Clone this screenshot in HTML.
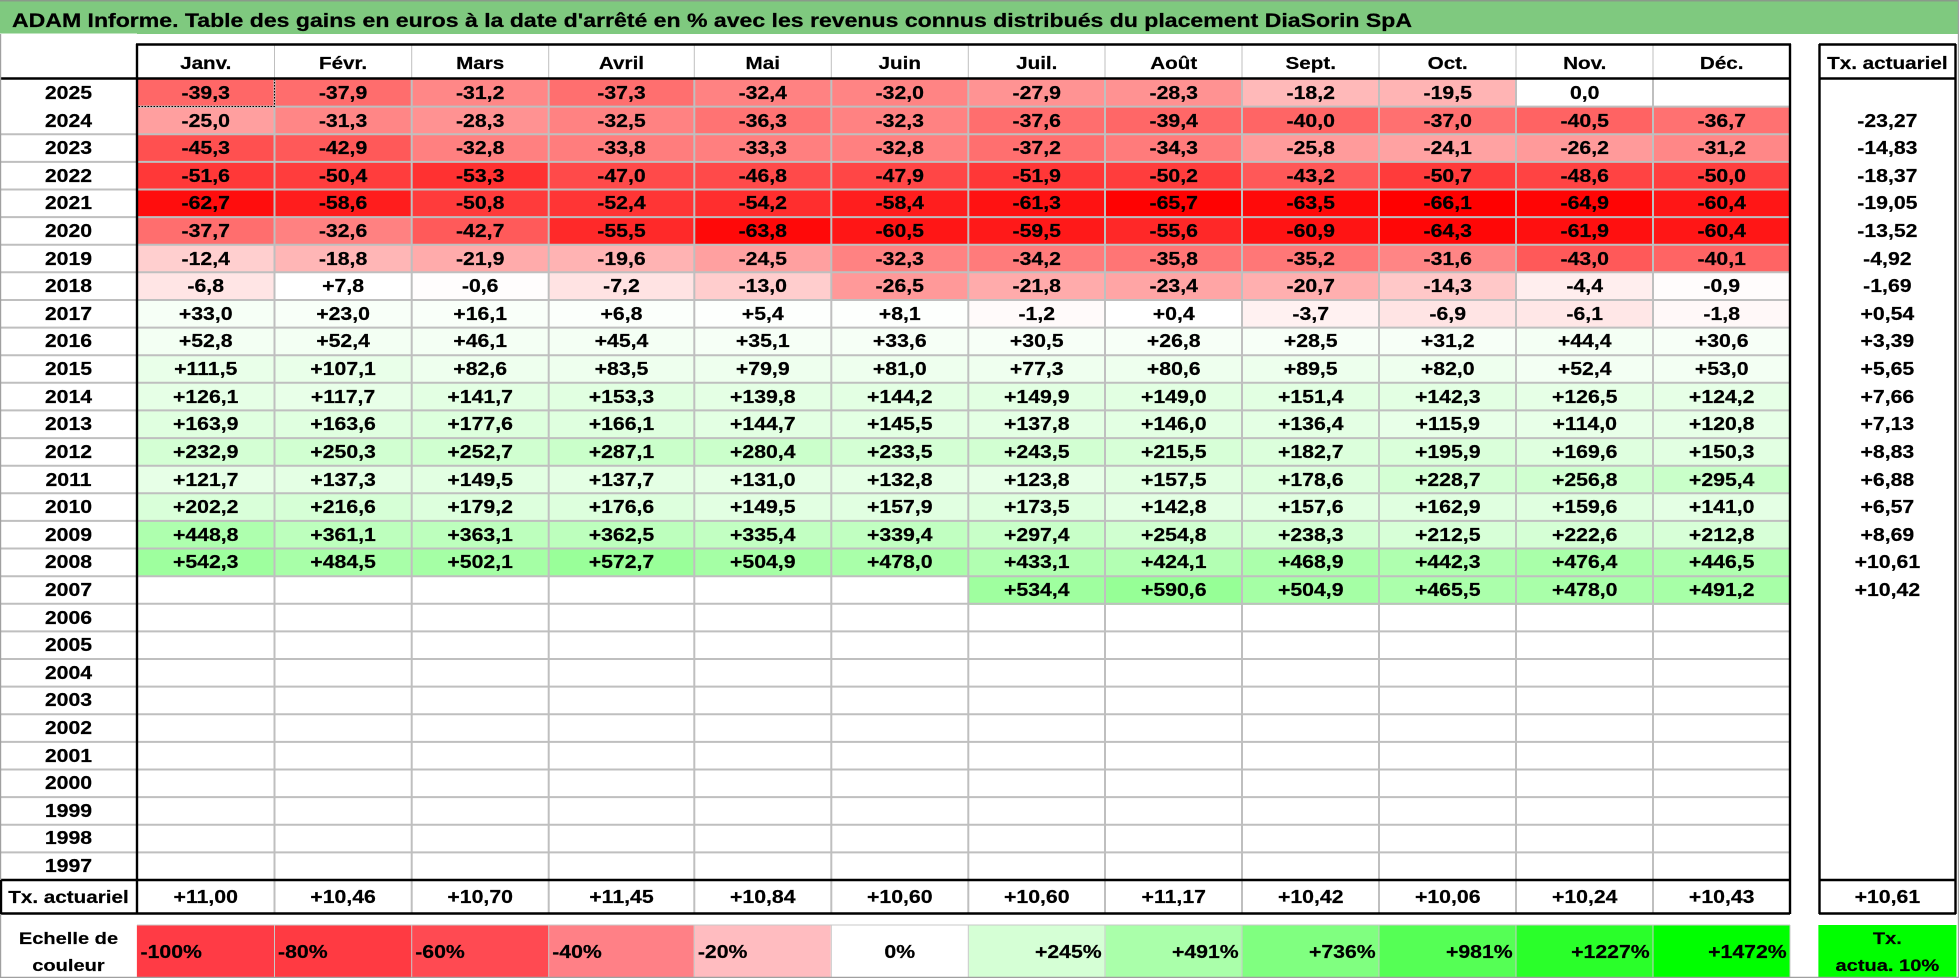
<!DOCTYPE html>
<html lang="fr"><head><meta charset="utf-8"><title>ADAM Informe</title>
<style>
html,body{margin:0;padding:0;background:#fff}
#p{position:relative;width:1959px;height:978px;overflow:hidden;background:#fff;font-family:"Liberation Sans",Arial,sans-serif;color:#000}
#t{position:absolute;left:0;top:0;width:1660.2px;height:978px;transform-origin:0 0;transform:scaleX(1.18);font-weight:700;font-size:18px;-webkit-text-stroke:.2px #000}
.r{position:absolute;left:0;width:100%;display:grid;grid-template-columns:116.1px 116.5px 116.3px 116.1px 123.4px repeat(8,116.1px) 24.3px 116.1px;text-align:center;white-space:nowrap}
.d{height:27.62px;line-height:29px}
.w{position:absolute;left:0;top:79px;width:100%}
.w .r{position:relative}
.r i,.r s,.r u,.r b{display:block;font-style:normal;text-decoration:none;font-weight:700}
.r i{background:rgb(255,var(--g),var(--g))}
.r s{background:rgb(calc(var(--r) - 3),255,calc(var(--r) - 3))}
.r .x{grid-column:15}
.h{top:45px;height:33px;line-height:36px;font-size:17.5px}
.f{top:881px;height:32px;line-height:33px}
.l{top:925px;height:52px;line-height:54px}
.l .a{text-align:left;padding-left:3px}
.l .e{text-align:right;padding-right:3px}
.l .c{line-height:27px;font-size:17px}
svg{position:absolute;left:0;top:0}
</style></head><body><div id="p">
<svg width="1959" height="978" style="z-index:0"><rect x="0" y="0" width="1959" height="33.5" fill="#7FC97F"/><rect x="137" y="33" width="1822" height="1" fill="#7FC97F"/><rect width="1959" height="1.5" fill="#8A9A8A"/><text x="12" y="26.8" font-family="Liberation Sans" font-weight="700" font-size="19" fill="#000" stroke="#000" stroke-width=".25" textLength="1400" lengthAdjust="spacingAndGlyphs">ADAM Informe. Table des gains en euros à la date d'arrêté en % avec les revenus connus distribués du placement DiaSorin SpA</text></svg>
<div id="t">
<div class="r h"><b></b><b>Janv.</b><b>Févr.</b><b>Mars</b><b>Avril</b><b>Mai</b><b>Juin</b><b>Juil.</b><b>Août</b><b>Sept.</b><b>Oct.</b><b>Nov.</b><b>Déc.</b><b class="x">Tx. actuariel</b></div>
<div class="w">
<div class="r d"><b>2025</b><i style="--g:103">-39,3</i><i style="--g:109">-37,9</i><i style="--g:135">-31,2</i><i style="--g:111">-37,3</i><i style="--g:130">-32,4</i><i style="--g:132">-32,0</i><i style="--g:147">-27,9</i><i style="--g:146">-28,3</i><i style="--g:185">-18,2</i><i style="--g:180">-19,5</i><u>0,0</u><u></u><b class="x"></b></div>
<div class="r d"><b>2024</b><i style="--g:159">-25,0</i><i style="--g:134">-31,3</i><i style="--g:146">-28,3</i><i style="--g:130">-32,5</i><i style="--g:115">-36,3</i><i style="--g:130">-32,3</i><i style="--g:110">-37,6</i><i style="--g:103">-39,4</i><i style="--g:101">-40,0</i><i style="--g:112">-37,0</i><i style="--g:99">-40,5</i><i style="--g:113">-36,7</i><b class="x">-23,27</b></div>
<div class="r d"><b>2023</b><i style="--g:80">-45,3</i><i style="--g:89">-42,9</i><i style="--g:128">-32,8</i><i style="--g:125">-33,8</i><i style="--g:127">-33,3</i><i style="--g:128">-32,8</i><i style="--g:111">-37,2</i><i style="--g:123">-34,3</i><i style="--g:155">-25,8</i><i style="--g:162">-24,1</i><i style="--g:154">-26,2</i><i style="--g:135">-31,2</i><b class="x">-14,83</b></div>
<div class="r d"><b>2022</b><i style="--g:56">-51,6</i><i style="--g:61">-50,4</i><i style="--g:49">-53,3</i><i style="--g:74">-47,0</i><i style="--g:74">-46,8</i><i style="--g:70">-47,9</i><i style="--g:55">-51,9</i><i style="--g:61">-50,2</i><i style="--g:88">-43,2</i><i style="--g:59">-50,7</i><i style="--g:67">-48,6</i><i style="--g:62">-50,0</i><b class="x">-18,37</b></div>
<div class="r d"><b>2021</b><i style="--g:13">-62,7</i><i style="--g:29">-58,6</i><i style="--g:59">-50,8</i><i style="--g:53">-52,4</i><i style="--g:46">-54,2</i><i style="--g:30">-58,4</i><i style="--g:18">-61,3</i><i style="--g:2">-65,7</i><i style="--g:10">-63,5</i><i style="--g:0">-66,1</i><i style="--g:5">-64,9</i><i style="--g:22">-60,4</i><b class="x">-19,05</b></div>
<div class="r d"><b>2020</b><i style="--g:110">-37,7</i><i style="--g:129">-32,6</i><i style="--g:90">-42,7</i><i style="--g:41">-55,5</i><i style="--g:9">-63,8</i><i style="--g:22">-60,5</i><i style="--g:25">-59,5</i><i style="--g:40">-55,6</i><i style="--g:20">-60,9</i><i style="--g:7">-64,3</i><i style="--g:16">-61,9</i><i style="--g:22">-60,4</i><b class="x">-13,52</b></div>
<div class="r d"><b>2019</b><i style="--g:207">-12,4</i><i style="--g:182">-18,8</i><i style="--g:171">-21,9</i><i style="--g:179">-19,6</i><i style="--g:160">-24,5</i><i style="--g:130">-32,3</i><i style="--g:123">-34,2</i><i style="--g:117">-35,8</i><i style="--g:119">-35,2</i><i style="--g:133">-31,6</i><i style="--g:89">-43,0</i><i style="--g:100">-40,1</i><b class="x">-4,92</b></div>
<div class="r d"><b>2018</b><i style="--g:229">-6,8</i><s style="--r:258">+7,8</s><i style="--g:253">-0,6</i><i style="--g:227">-7,2</i><i style="--g:205">-13,0</i><i style="--g:153">-26,5</i><i style="--g:171">-21,8</i><i style="--g:165">-23,4</i><i style="--g:175">-20,7</i><i style="--g:200">-14,3</i><i style="--g:238">-4,4</i><i style="--g:252">-0,9</i><b class="x">-1,69</b></div>
<div class="r d"><b>2017</b><s style="--r:249">+33,0</s><s style="--r:251">+23,0</s><s style="--r:252">+16,1</s><s style="--r:254">+6,8</s><s style="--r:256">+5,4</s><s style="--r:256">+8,1</s><i style="--g:250">-1,2</i><s style="--r:258">+0,4</s><i style="--g:241">-3,7</i><i style="--g:228">-6,9</i><i style="--g:231">-6,1</i><i style="--g:248">-1,8</i><b class="x">+0,54</b></div>
<div class="r d"><b>2016</b><s style="--r:246">+52,8</s><s style="--r:246">+52,4</s><s style="--r:247">+46,1</s><s style="--r:247">+45,4</s><s style="--r:249">+35,1</s><s style="--r:249">+33,6</s><s style="--r:250">+30,5</s><s style="--r:250">+26,8</s><s style="--r:250">+28,5</s><s style="--r:250">+31,2</s><s style="--r:247">+44,4</s><s style="--r:250">+30,6</s><b class="x">+3,39</b></div>
<div class="r d"><b>2015</b><s style="--r:236">+111,5</s><s style="--r:236">+107,1</s><s style="--r:241">+82,6</s><s style="--r:241">+83,5</s><s style="--r:241">+79,9</s><s style="--r:241">+81,0</s><s style="--r:242">+77,3</s><s style="--r:241">+80,6</s><s style="--r:240">+89,5</s><s style="--r:241">+82,0</s><s style="--r:246">+52,4</s><s style="--r:246">+53,0</s><b class="x">+5,65</b></div>
<div class="r d"><b>2014</b><s style="--r:233">+126,1</s><s style="--r:235">+117,7</s><s style="--r:230">+141,7</s><s style="--r:228">+153,3</s><s style="--r:231">+139,8</s><s style="--r:230">+144,2</s><s style="--r:229">+149,9</s><s style="--r:229">+149,0</s><s style="--r:229">+151,4</s><s style="--r:230">+142,3</s><s style="--r:233">+126,5</s><s style="--r:233">+124,2</s><b class="x">+7,66</b></div>
<div class="r d"><b>2013</b><s style="--r:227">+163,9</s><s style="--r:227">+163,6</s><s style="--r:224">+177,6</s><s style="--r:226">+166,1</s><s style="--r:230">+144,7</s><s style="--r:230">+145,5</s><s style="--r:231">+137,8</s><s style="--r:230">+146,0</s><s style="--r:231">+136,4</s><s style="--r:235">+115,9</s><s style="--r:235">+114,0</s><s style="--r:234">+120,8</s><b class="x">+7,13</b></div>
<div class="r d"><b>2012</b><s style="--r:215">+232,9</s><s style="--r:212">+250,3</s><s style="--r:211">+252,7</s><s style="--r:205">+287,1</s><s style="--r:206">+280,4</s><s style="--r:215">+233,5</s><s style="--r:213">+243,5</s><s style="--r:218">+215,5</s><s style="--r:223">+182,7</s><s style="--r:221">+195,9</s><s style="--r:226">+169,6</s><s style="--r:229">+150,3</s><b class="x">+8,83</b></div>
<div class="r d"><b>2011</b><s style="--r:234">+121,7</s><s style="--r:231">+137,3</s><s style="--r:229">+149,5</s><s style="--r:231">+137,7</s><s style="--r:232">+131,0</s><s style="--r:232">+132,8</s><s style="--r:234">+123,8</s><s style="--r:228">+157,5</s><s style="--r:224">+178,6</s><s style="--r:215">+228,7</s><s style="--r:211">+256,8</s><s style="--r:204">+295,4</s><b class="x">+6,88</b></div>
<div class="r d"><b>2010</b><s style="--r:220">+202,2</s><s style="--r:217">+216,6</s><s style="--r:224">+179,2</s><s style="--r:224">+176,6</s><s style="--r:229">+149,5</s><s style="--r:228">+157,9</s><s style="--r:225">+173,5</s><s style="--r:230">+142,8</s><s style="--r:228">+157,6</s><s style="--r:227">+162,9</s><s style="--r:227">+159,6</s><s style="--r:231">+141,0</s><b class="x">+6,57</b></div>
<div class="r d"><b>2009</b><s style="--r:177">+448,8</s><s style="--r:192">+361,1</s><s style="--r:192">+363,1</s><s style="--r:192">+362,5</s><s style="--r:197">+335,4</s><s style="--r:196">+339,4</s><s style="--r:203">+297,4</s><s style="--r:211">+254,8</s><s style="--r:214">+238,3</s><s style="--r:218">+212,5</s><s style="--r:216">+222,6</s><s style="--r:218">+212,8</s><b class="x">+8,69</b></div>
<div class="r d"><b>2008</b><s style="--r:161">+542,3</s><s style="--r:171">+484,5</s><s style="--r:168">+502,1</s><s style="--r:156">+572,7</s><s style="--r:168">+504,9</s><s style="--r:172">+478,0</s><s style="--r:180">+433,1</s><s style="--r:182">+424,1</s><s style="--r:174">+468,9</s><s style="--r:178">+442,3</s><s style="--r:172">+476,4</s><s style="--r:178">+446,5</s><b class="x">+10,61</b></div>
<div class="r d"><b>2007</b><u></u><u></u><u></u><u></u><u></u><u></u><s style="--r:162">+534,4</s><s style="--r:153">+590,6</s><s style="--r:168">+504,9</s><s style="--r:174">+465,5</s><s style="--r:172">+478,0</s><s style="--r:170">+491,2</s><b class="x">+10,42</b></div>
<div class="r d"><b>2006</b></div>
<div class="r d"><b>2005</b></div>
<div class="r d"><b>2004</b></div>
<div class="r d"><b>2003</b></div>
<div class="r d"><b>2002</b></div>
<div class="r d"><b>2001</b></div>
<div class="r d"><b>2000</b></div>
<div class="r d"><b>1999</b></div>
<div class="r d"><b>1998</b></div>
<div class="r d"><b>1997</b></div>
</div>
<div class="r f"><b style="font-size:17.5px">Tx. actuariel</b><b>+11,00</b><b>+10,46</b><b>+10,70</b><b>+11,45</b><b>+10,84</b><b>+10,60</b><b>+10,60</b><b>+11,17</b><b>+10,42</b><b>+10,06</b><b>+10,24</b><b>+10,43</b><b class="x">+10,61</b></div>
<div class="r l"><b class="c">Echelle de<br>couleur</b><b class="a" style="background:#FF3B45">-100%</b><b class="a" style="background:#FF3A42">-80%</b><b class="a" style="background:#FF4A52">-60%</b><b class="a" style="background:#FF8086">-40%</b><b class="a" style="background:#FFBCC0">-20%</b><b>0%</b><b class="e" style="background:#D5FFD5">+245%</b><b class="e" style="background:#AAFFAA">+491%</b><b class="e" style="background:#80FF80">+736%</b><b class="e" style="background:#55FF55">+981%</b><b class="e" style="background:#2AFF2A">+1227%</b><b class="e" style="background:#00FF00">+1472%</b><b class="x c" style="background:#00FF00">Tx.<br>actua. 10%</b></div>
</div>
<svg width="1959" height="978" style="z-index:2" fill="none">
<path stroke="#BFBFBF" stroke-width="2" d="M137 106.6H1790M0 134.2H1790M0 161.9H1790M0 189.5H1790M0 217.1H1790M0 244.7H1790M0 272.3H1790M0 300H1790M0 327.6H1790M0 355.2H1790M0 382.8H1790M0 410.4H1790M0 438.1H1790M0 465.7H1790M0 493.3H1790M0 520.9H1790M0 548.5H1790M0 576.2H1790M0 603.8H1790M0 631.4H1790M0 659H1790M0 686.6H1790M0 714.3H1790M0 741.9H1790M0 769.5H1790M0 797.1H1790M0 824.7H1790M0 852.4H1790"/>
<path stroke="#BFBFBF" stroke-width="2" d="M274.5 79V913M411.7 79V913M548.7 79V913M694.3 79V913M831.3 79V913M968.3 79V913M1105 79V913M1242 79V913M1379 79V913M1516 79V913M1653 79V913"/>
<path stroke="#BFBFBF" stroke-width="1" d="M274.5 45V78M411.7 45V78M548.7 45V78M694.3 45V78M831.3 45V78M968.3 45V78M1105 45V78M1242 45V78M1379 45V78M1516 45V78M1653 45V78"/>
<path stroke="#C8C8C8" stroke-width="1" d="M137 925H1790M274.5 925V977M411.7 925V977M548.7 925V977M694.3 925V977M831.3 925V977M968.3 925V977M1105 925V977M1242 925V977M1379 925V977M1516 925V977M1653 925V977M1790 925V977"/>
<path stroke="#000" stroke-width="2.4" d="M137 44V914M1790 44V914M136 44.5H1791M0 78.5H1790M0 880H1790M0 913.5H1790M1819.5 44V914M1955.5 44V914M1819 44.5H1956M1819 78.5H1956M1819 880H1956M1819 913.5H1956M1 880V914"/>
<path stroke="#000" stroke-width="1" stroke-dasharray="1.5 1.5" d="M274.5 79V106.5H137"/>
<path stroke="#A0A0A0" stroke-width="1.4" d="M0 977.5H1959M.5 34V880M.5 914V978M1958.5 0V978"/>
</svg>
</div></body></html>
